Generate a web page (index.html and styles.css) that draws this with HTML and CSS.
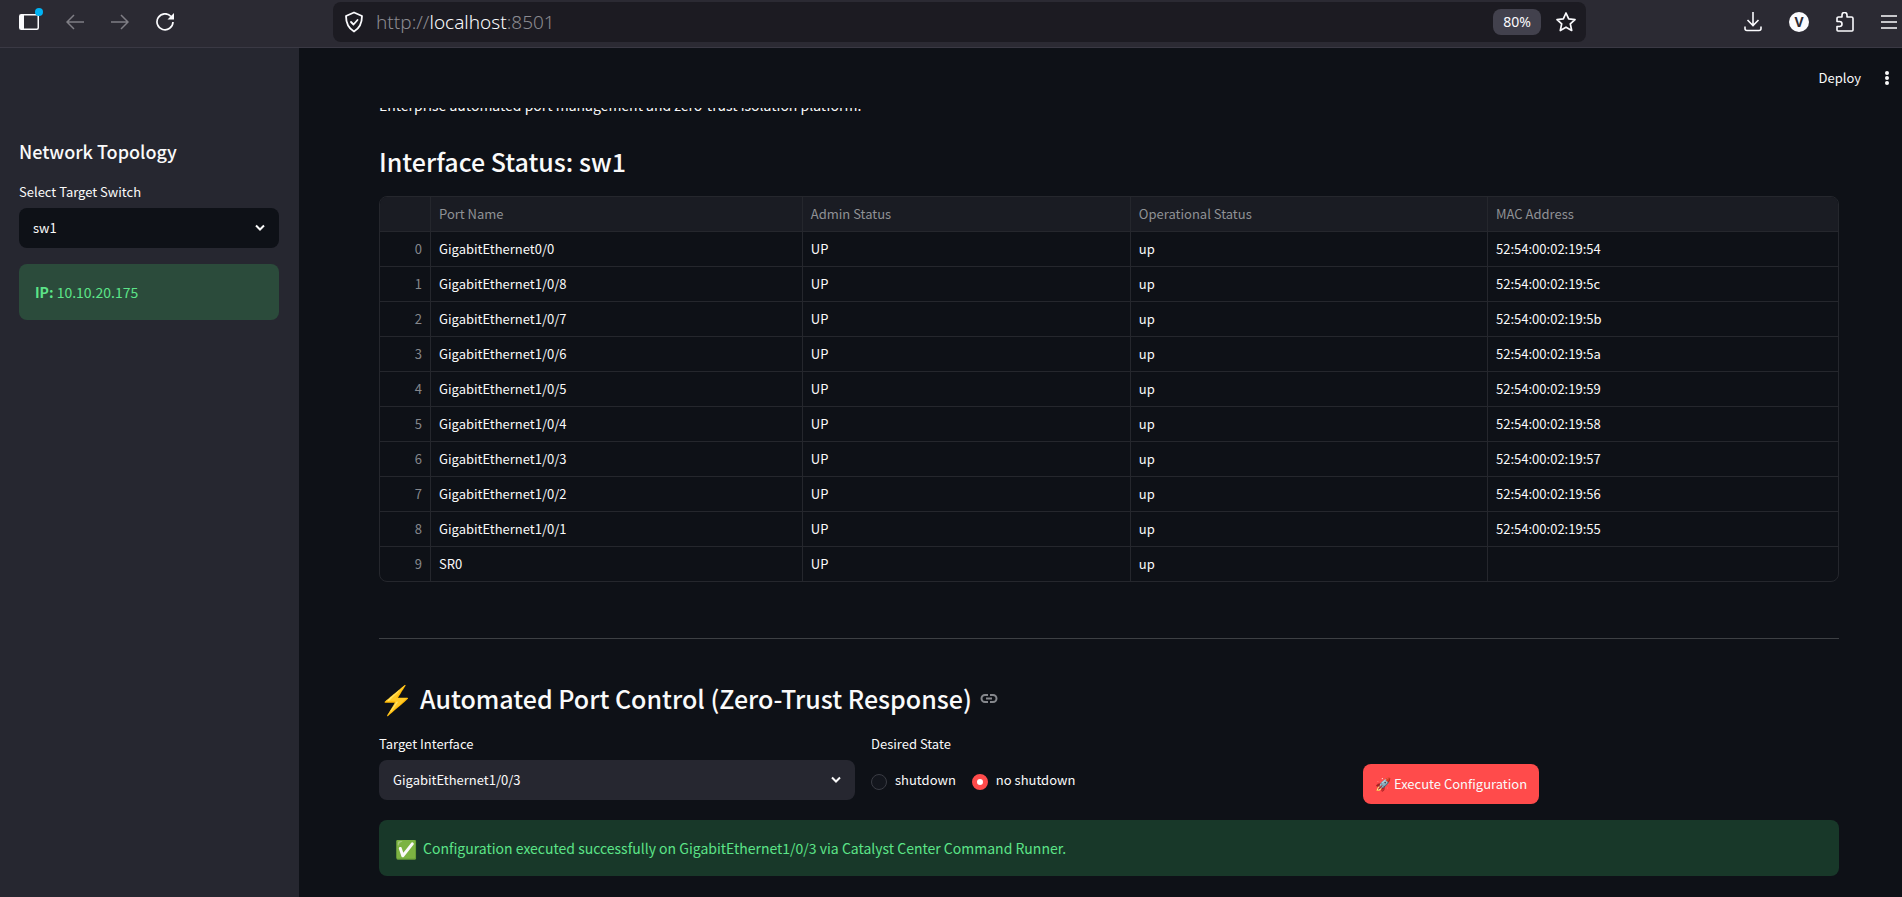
FILE: index.html
```html
<!DOCTYPE html>
<html lang="en">
<head>
    <meta charset="UTF-8">
    <meta name="viewport" content="width=device-width, initial-scale=1.0">
    <title>Network Topology</title>
    <link rel="stylesheet" href="styles.css">
</head>
<body>
    <nav class="browser-bar">
        <div class="nav-buttons">
            <button class="icon-button tabs-button" aria-label="Sidebar">
                <svg width="20" height="16" viewBox="0 0 20 16" fill="none" stroke="#fbfbfe" stroke-width="1.5"><rect x=".75" y=".75" width="18.500" height="14.500" rx="1.500"/><path d="M1 1h4v14H1z" fill="#fbfbfe" stroke="none"/></svg>
                <span class="badge"></span>
            </button>
            <button class="icon-button dim" aria-label="Back">
                <svg width="18" height="16" viewBox="0 0 18 16" fill="none" stroke="currentColor" stroke-width="1.5"><path d="M18 8H1M8 1L1 8l7 7"/></svg>
            </button>
            <button class="icon-button dim" aria-label="Forward">
                <svg width="18" height="16" viewBox="0 0 18 16" fill="none" stroke="currentColor" stroke-width="1.5"><path d="M0 8h17M10 1l7 7-7 7"/></svg>
            </button>
            <button class="icon-button" aria-label="Reload">
                <svg width="18" height="18" viewBox="0 0 18 18" fill="none" stroke="currentColor" stroke-width="1.700"><path d="M15 3.500A8 8 0 1 0 17 9"/><path d="M18 0v6.500h-6.500z" fill="currentColor" stroke="none"/></svg>
            </button>
        </div>
        <div class="url-bar">
            <svg width="20" height="22" viewBox="0 0 20 22" fill="none" stroke="#fbfbfe" stroke-width="1.800" stroke-linejoin="round" stroke-linecap="round"><path d="M10 1.500L18 5c0 7-2 12-8 15.500C4 17 2 12 2 5z"/><path d="M7 11l2.500 2.500 4-4.500"/></svg>
            <span class="url">http://<b>localhost</b>:8501</span>
            <button class="zoom-level">80%</button>
            <button class="icon-button" aria-label="Bookmark">
                <svg width="22" height="22" viewBox="0 0 22 22" fill="none" stroke="currentColor" stroke-width="1.700" stroke-linejoin="round"><path d="M11 2l2.700 5.900 6.300.7-4.700 4.300 1.400 6.600L11 16.200l-5.700 3.300 1.400-6.600L2 8.600l6.300-.7z"/></svg>
            </button>
        </div>
        <div class="tool-buttons">
            <button class="icon-button" aria-label="Downloads">
                <svg width="18" height="20" viewBox="0 0 18 20" fill="none" stroke="currentColor" stroke-width="1.600"><path d="M9 0v13M3.500 8L9 13.500 14.500 8M1 14.500v2a2 2 0 0 0 2 2h12a2 2 0 0 0 2-2v-2"/></svg>
            </button>
            <button class="account" aria-label="Account">V</button>
            <button class="icon-button" aria-label="Extensions">
                <svg width="18" height="20" viewBox="0 0 18 20" fill="none" stroke="currentColor" stroke-width="1.600" stroke-linejoin="round"><path d="M1 9.500V6.500A1.500 1.500 0 0 1 2.500 5H6V3a2.500 2.500 0 0 1 5 0v2h4.500A1.500 1.500 0 0 1 17 6.500V18a1 1 0 0 1-1 1H2a1 1 0 0 1-1-1v-3.500h2.500a2.500 2.500 0 0 0 0-5z"/></svg>
            </button>
            <button class="icon-button" aria-label="Menu">
                <svg width="16" height="14" viewBox="0 0 16 14" stroke="currentColor" stroke-width="1.600"><path d="M0 1h16M0 7h16M0 13h16"/></svg>
            </button>
        </div>
    </nav>

    <div class="app">
        <aside class="sidebar">
            <h2>Network Topology</h2>
            <label class="field-label" for="switch">Select Target Switch</label>
            <div class="select">
                <select id="switch">
                    <option>sw1</option>
                </select>
                <svg class="chevron" width="10" height="8" viewBox="0 0 10 8" fill="none" stroke="#fafafa" stroke-width="2"><path d="M1 1.500l4 4 4-4"/></svg>
            </div>
            <div class="alert alert-ip"><p><strong>IP:</strong> 10.10.20.175</p></div>
        </aside>

        <main class="main">
            <header class="header">
                <button class="deploy">Deploy</button>
                <button class="icon-button" aria-label="App menu">
                    <svg width="4" height="16" viewBox="0 0 4 16" fill="#fafafa"><circle cx="2" cy="3" r="2"/><circle cx="2" cy="8" r="2"/><circle cx="2" cy="13" r="2"/></svg>
                </button>
            </header>

            <div class="content">
                <div class="intro"><p>Enterprise automated port management and zero-trust isolation platform.</p></div>
                <h2>Interface Status: sw1</h2>
                <table class="interfaces">
                    <thead>
                        <tr><th class="index"></th><th class="port">Port Name</th><th class="admin">Admin Status</th><th class="oper">Operational Status</th><th>MAC Address</th></tr>
                    </thead>
                    <tbody>
                        <tr><td>0</td><td>GigabitEthernet0/0</td><td>UP</td><td>up</td><td>52:54:00:02:19:54</td></tr>
                        <tr><td>1</td><td>GigabitEthernet1/0/8</td><td>UP</td><td>up</td><td>52:54:00:02:19:5c</td></tr>
                        <tr><td>2</td><td>GigabitEthernet1/0/7</td><td>UP</td><td>up</td><td>52:54:00:02:19:5b</td></tr>
                        <tr><td>3</td><td>GigabitEthernet1/0/6</td><td>UP</td><td>up</td><td>52:54:00:02:19:5a</td></tr>
                        <tr><td>4</td><td>GigabitEthernet1/0/5</td><td>UP</td><td>up</td><td>52:54:00:02:19:59</td></tr>
                        <tr><td>5</td><td>GigabitEthernet1/0/4</td><td>UP</td><td>up</td><td>52:54:00:02:19:58</td></tr>
                        <tr><td>6</td><td>GigabitEthernet1/0/3</td><td>UP</td><td>up</td><td>52:54:00:02:19:57</td></tr>
                        <tr><td>7</td><td>GigabitEthernet1/0/2</td><td>UP</td><td>up</td><td>52:54:00:02:19:56</td></tr>
                        <tr><td>8</td><td>GigabitEthernet1/0/1</td><td>UP</td><td>up</td><td>52:54:00:02:19:55</td></tr>
                        <tr><td>9</td><td>SR0</td><td>UP</td><td>up</td><td></td></tr>
                    </tbody>
                </table>

                <hr>

                <h2 class="control-title">
                    <span class="bolt">⚡</span>
                    Automated Port Control (Zero-Trust Response)
                    <a href="#" aria-label="Link to heading"><svg width="18" height="18" viewBox="0 0 18 18" fill="none" stroke="#85878c" stroke-width="2"><path d="M8 6H5a3.500 3.500 0 0 0 0 7h3M10 6h3a3.500 3.500 0 0 1 0 7h-3M6 9.500h6"/></svg></a>
                </h2>
                <form class="controls">
                    <div>
                        <label class="field-label" for="interface">Target Interface</label>
                        <div class="select">
                            <select id="interface">
                                <option>GigabitEthernet1/0/3</option>
                            </select>
                            <svg class="chevron" width="10" height="8" viewBox="0 0 10 8" fill="none" stroke="#fafafa" stroke-width="2"><path d="M1 1.500l4 4 4-4"/></svg>
                        </div>
                    </div>
                    <fieldset>
                        <legend class="field-label">Desired State</legend>
                        <div class="radios">
                            <label><input type="radio" name="state" value="shutdown"> shutdown</label>
                            <label><input type="radio" name="state" value="no shutdown" checked> no shutdown</label>
                        </div>
                    </fieldset>
                    <div class="action">
                        <button type="button" class="execute">🚀 Execute Configuration</button>
                    </div>
                </form>
                <div class="alert alert-success"><span class="alert-icon">✅</span><p>Configuration executed successfully on GigabitEthernet1/0/3 via Catalyst Center Command Runner.</p></div>
            </div>
        </main>
    </div>
</body>
</html>
```

FILE: styles.css
```css
* {
    box-sizing: border-box;
}
body {
    font-family: "Noto Sans CJK SC", "Noto Sans", sans-serif;
    font-size: 13px;
    line-height: 20px;
    margin: 0;
    min-height: 100vh;
    display: flex;
    flex-direction: column;
    background-color: #0e1117;
    color: #fafafa;
}
h2, p {
    margin: 0;
}
h2 {
    font-weight: 500;
}
button, select {
    font: inherit;
    color: inherit;
    border: none;
    background: none;
    padding: 0;
    cursor: pointer;
}
.browser-bar {
    display: flex;
    align-items: center;
    height: 48px;
    padding: 0 5px 3px 19px;
    background-color: #2b2a33;
    border-bottom: 1px solid #3a3944;
    color: #fbfbfe;
}
.nav-buttons {
    display: flex;
    gap: 27px;
    width: 314px;
}
.icon-button {
    display: flex;
    align-items: center;
    justify-content: center;
    position: relative;
}
.dim {
    color: #7f7e85;
}
.badge {
    position: absolute;
    top: -5px;
    right: -4px;
    width: 8px;
    height: 8px;
    border-radius: 50%;
    background-color: #00b3f4;
}
.url-bar {
    flex: 1;
    display: flex;
    align-items: center;
    height: 40px;
    padding: 0 9px 0 11px;
    border-radius: 8px;
    background-color: #1c1b22;
}
.url {
    flex: 1;
    margin-left: 12px;
    font-family: "Noto Sans", sans-serif;
    font-size: 19px;
    font-weight: 300;
    color: #8b8a90;
}
.url b {
    font-weight: inherit;
    color: #fbfbfe;
}
.zoom-level {
    width: 48px;
    height: 26px;
    margin-right: 14px;
    border-radius: 8px;
    background-color: #42414d;
    font-family: "Noto Sans", sans-serif;
    font-size: 14px;
}
.tool-buttons {
    display: flex;
    align-items: center;
    gap: 27px;
    margin-left: 158px;
}
.account {
    width: 20px;
    height: 20px;
    border-radius: 50%;
    background-color: #fbfbfe;
    color: #2b2a33;
    font: bold 14px/20px "Noto Sans", sans-serif;
}
.app {
    flex: 1;
    display: flex;
}
.sidebar {
    width: 299px;
    padding: 91px 20px 20px 19px;
    background-color: #262730;
}
.sidebar h2 {
    font-size: 18px;
    line-height: 24px;
    margin-bottom: 19px;
}
.field-label {
    display: block;
    padding: 0;
    margin-bottom: 6px;
}
.select {
    position: relative;
}
.select select {
    appearance: none;
    width: 100%;
    height: 40px;
    padding: 0 14px;
    border-radius: 8px;
    background-color: #262730;
}
.sidebar .select select {
    background-color: #0e1117;
}
.chevron {
    position: absolute;
    top: 16px;
    right: 14px;
    pointer-events: none;
}
.alert {
    display: flex;
    align-items: center;
    gap: 6px;
    height: 56px;
    padding: 0 16px;
    margin-top: 16px;
    border-radius: 8px;
    font-size: 14px;
    color: #5ce488;
}
.alert-ip {
    background-color: #2b4b3b;
}
.alert-success {
    background-color: #183829;
}
.alert-icon {
    font-size: 18px;
}
.alert strong {
    font-weight: 700;
}
.main {
    flex: 1;
}
.header {
    display: flex;
    align-items: center;
    justify-content: flex-end;
    gap: 24px;
    height: 60px;
    padding: 0 13px 0 0;
}
.content {
    padding: 0 63px 20px 80px;
}
.intro {
    display: flex;
    align-items: flex-end;
    height: 8px;
    overflow: hidden;
    font-size: 14px;
    line-height: 22px;
}
.content h2 {
    font-size: 25px;
    line-height: 34px;
}
.intro + h2 {
    margin: 28px 0 18px;
}
.interfaces {
    width: 100%;
    table-layout: fixed;
    border-collapse: separate;
    border-spacing: 0;
    border: 1px solid #25272d;
    border-radius: 8px;
    overflow: hidden;
}
.interfaces th, .interfaces td {
    height: 35px;
    padding: 0 8px;
    border-left: 1px solid #25272d;
    border-top: 1px solid #25272d;
    text-align: left;
    font-weight: 400;
}
.interfaces th {
    border-top: none;
    height: 34px;
    background-color: #1a1c23;
    color: #8f9195;
}
.interfaces th:first-child, .interfaces td:first-child {
    border-left: none;
    text-align: right;
    color: #85878c;
}
.interfaces .index {
    width: 50px;
}
.port {
    width: 25.5%;
}
.admin {
    width: 22.5%;
}
.oper {
    width: 24.5%;
}
hr {
    margin: 56px 0 42px;
    border: none;
    border-top: 1px solid #3d4044;
}
.control-title {
    display: flex;
    align-items: center;
    gap: 6px;
    margin-bottom: 19px;
}
.bolt {
    font-size: 28px;
}
.control-title a {
    display: flex;
    margin-left: 2px;
}
.controls {
    display: grid;
    grid-template-columns: repeat(3, 1fr);
    gap: 16px;
}
fieldset {
    margin: 0;
    padding: 0;
    border: none;
}
.radios {
    display: flex;
    align-items: center;
    gap: 16px;
    height: 40px;
}
.radios label {
    display: flex;
    align-items: center;
    gap: 8px;
}
.radios input {
    appearance: none;
    width: 16px;
    height: 16px;
    margin: 3px 0 0;
    border: 1px solid #3a3c44;
    border-radius: 50%;
    background-color: #13161d;
}
.radios input:checked {
    border: 5px solid #ff4b4b;
    background-color: #fff;
}
.action {
    padding-top: 30px;
}
.execute {
    height: 40px;
    padding: 0 12px;
    border-radius: 8px;
    background-color: #ff4b4b;
}
```
